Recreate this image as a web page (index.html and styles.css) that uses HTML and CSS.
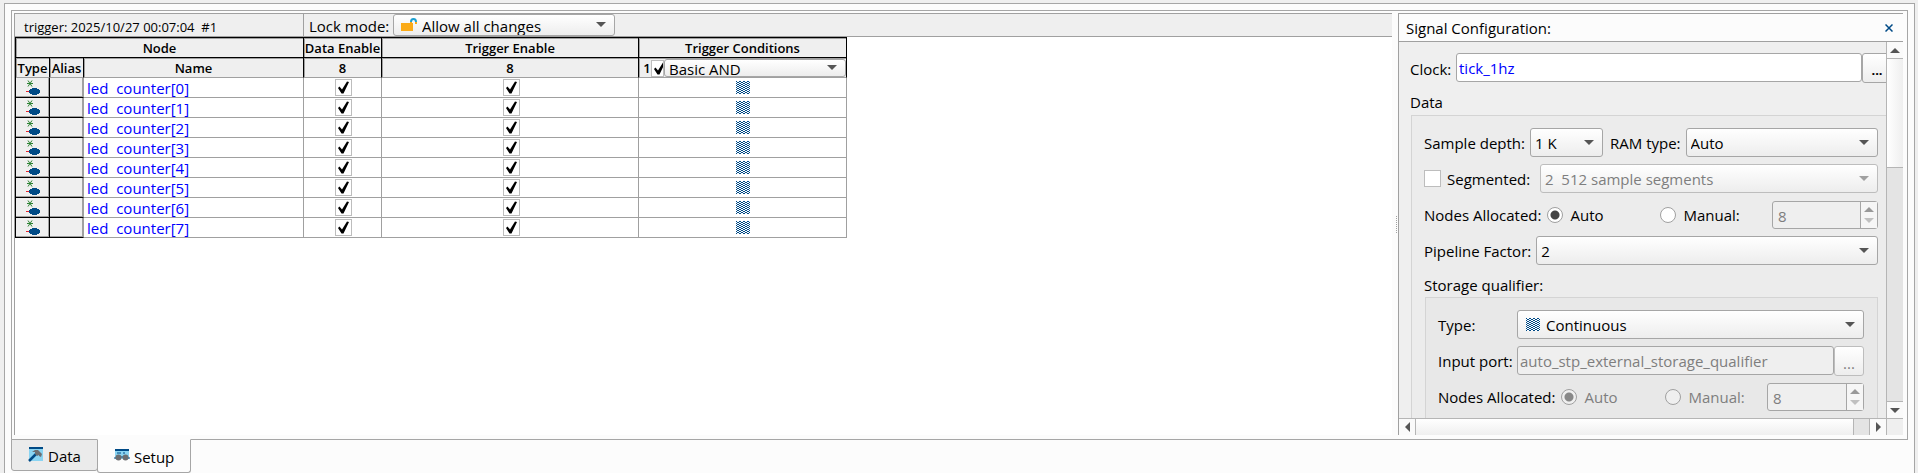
FILE: index.html
```html
<!DOCTYPE html>
<html lang="en">
<head>
<meta charset="utf-8">
<title>Signal Configuration</title>
<link rel="stylesheet" href="styles.css">
</head>
<body>
<svg class="defs" aria-hidden="true">
  <defs>
    <pattern id="weave" width="4" height="4" patternUnits="userSpaceOnUse">
      <rect width="4" height="4" fill="#004a86"/>
      <path d="M0 1h1v1h-1zM3 1h1v1h-1zM1 2h2v1h-2zM0 3h1v1h-1zM3 3h1v1h-1zM1 0h2v1h-2z" fill="#fff"/>
    </pattern>
    <symbol id="dontcare" viewBox="0 0 14 13"><rect width="14" height="13" fill="url(#weave)" shape-rendering="crispEdges"/></symbol>
    <symbol id="node" viewBox="0 0 14 15">
      <path d="M2 0.500L6 6.500M6 0.500L2 6.500M1 3.500H7" stroke="#2c8233" fill="none"/>
      <path d="M0 11h3v1h-3z" fill="#e3262e"/>
      <path d="M6 8h5v1h2v1h1v3h-1v1h-2v1h-5v-1h-2v-1h-1v-3h1v-1h2z" fill="#004a86"/>
    </symbol>
  </defs>
</svg>
<main class="window">
  <section class="page">
    <div class="left">
      <header class="toolbar">
        <span class="stamp">trigger: 2025/10/27 00:07:04&nbsp; #1</span>
        <label class="lock-label" for="lock">Lock mode:</label>
        <span class="select select-lock">
          <svg class="lock-icon" width="16" height="13" viewBox="0 0 16 13"><path d="M10 6V4C10 2 11 1 12.500 1S15 2 15 4" fill="none" stroke="#1d9fd0" stroke-width="2"/><path d="M10 6V4M15 6V4" stroke="#fbab18" stroke-width="2"/><path d="M0 5h12v8H0z" fill="#fbab18"/></svg>
          <select id="lock"><option>Allow all changes</option></select>
        </span>
      </header>
      <table class="nodes">
        <colgroup><col class="c-type"><col class="c-alias"><col class="c-name"><col class="c-data"><col class="c-trig"><col class="c-cond"></colgroup>
        <thead>
          <tr><th colspan="3">Node</th><th>Data Enable</th><th>Trigger Enable</th><th>Trigger Conditions</th></tr>
          <tr><th>Type</th><th>Alias</th><th>Name</th><th>8</th><th>8</th>
            <th class="cond"><div class="cond-row"><label for="c1">1</label><input id="c1" class="check" type="checkbox" checked><span class="select select-cond"><select aria-label="Condition"><option>Basic AND</option></select></span></div></th></tr>
        </thead>
        <tbody>
          <tr><td><svg class="node"><use href="#node"/></svg></td><td></td><td>led&nbsp; counter[0]</td><td><input class="check" type="checkbox" aria-label="Data enable 0" checked></td><td><input class="check" type="checkbox" aria-label="Trigger enable 0" checked></td><td><svg class="weave"><use href="#dontcare"/></svg></td></tr>
          <tr><td><svg class="node"><use href="#node"/></svg></td><td></td><td>led&nbsp; counter[1]</td><td><input class="check" type="checkbox" aria-label="Data enable 1" checked></td><td><input class="check" type="checkbox" aria-label="Trigger enable 1" checked></td><td><svg class="weave"><use href="#dontcare"/></svg></td></tr>
          <tr><td><svg class="node"><use href="#node"/></svg></td><td></td><td>led&nbsp; counter[2]</td><td><input class="check" type="checkbox" aria-label="Data enable 2" checked></td><td><input class="check" type="checkbox" aria-label="Trigger enable 2" checked></td><td><svg class="weave"><use href="#dontcare"/></svg></td></tr>
          <tr><td><svg class="node"><use href="#node"/></svg></td><td></td><td>led&nbsp; counter[3]</td><td><input class="check" type="checkbox" aria-label="Data enable 3" checked></td><td><input class="check" type="checkbox" aria-label="Trigger enable 3" checked></td><td><svg class="weave"><use href="#dontcare"/></svg></td></tr>
          <tr><td><svg class="node"><use href="#node"/></svg></td><td></td><td>led&nbsp; counter[4]</td><td><input class="check" type="checkbox" aria-label="Data enable 4" checked></td><td><input class="check" type="checkbox" aria-label="Trigger enable 4" checked></td><td><svg class="weave"><use href="#dontcare"/></svg></td></tr>
          <tr><td><svg class="node"><use href="#node"/></svg></td><td></td><td>led&nbsp; counter[5]</td><td><input class="check" type="checkbox" aria-label="Data enable 5" checked></td><td><input class="check" type="checkbox" aria-label="Trigger enable 5" checked></td><td><svg class="weave"><use href="#dontcare"/></svg></td></tr>
          <tr><td><svg class="node"><use href="#node"/></svg></td><td></td><td>led&nbsp; counter[6]</td><td><input class="check" type="checkbox" aria-label="Data enable 6" checked></td><td><input class="check" type="checkbox" aria-label="Trigger enable 6" checked></td><td><svg class="weave"><use href="#dontcare"/></svg></td></tr>
          <tr><td><svg class="node"><use href="#node"/></svg></td><td></td><td>led&nbsp; counter[7]</td><td><input class="check" type="checkbox" aria-label="Data enable 7" checked></td><td><input class="check" type="checkbox" aria-label="Trigger enable 7" checked></td><td><svg class="weave"><use href="#dontcare"/></svg></td></tr>
        </tbody>
      </table>
    </div>
    <div class="splitter"><i></i></div>
    <aside class="config">
      <header class="config-head">
        <h2>Signal Configuration:</h2>
        <button class="close" aria-label="Close"><svg width="8" height="8" viewBox="0 0 8 8"><path d="M0.500 0.500L7.500 7.500M7.500 0.500L0.500 7.500" stroke="#004a86" stroke-width="1.500"/></svg></button>
      </header>
      <div class="scroll">
        <div class="view">
          <div class="form">
            <div class="row clock">
              <label for="clock">Clock:</label>
              <input id="clock" class="text" type="text" value="tick_1hz"><button class="dots strong">...</button>
            </div>
            <h3>Data</h3>
            <div class="group">
              <div class="row">
                <label for="depth">Sample depth:</label>
                <span class="select select-depth"><select id="depth"><option>1 K</option></select></span>
                <label for="ram">RAM type:</label>
                <span class="select grow"><select id="ram"><option>Auto</option></select></span>
              </div>
              <div class="row">
                <input id="seg" class="check" type="checkbox">
                <label class="seg-label" for="seg">Segmented:</label>
                <span class="select grow off"><select aria-label="Segments" disabled><option>2&nbsp; 512 sample segments</option></select></span>
              </div>
              <div class="row nodes-row">
                <span>Nodes Allocated:</span>
                <label class="radio r-auto"><input type="radio" name="n1" checked>Auto</label>
                <label class="radio r-manual"><input type="radio" name="n1">Manual:</label>
                <span class="spin"><input type="text" aria-label="Nodes" value="8" disabled><span class="steps"><i class="up"></i><i class="down"></i></span></span>
              </div>
              <div class="row">
                <label for="pipe">Pipeline Factor:</label>
                <span class="select grow"><select id="pipe"><option>2</option></select></span>
              </div>
              <h3>Storage qualifier:</h3>
              <div class="group inner">
                <div class="row">
                  <label class="key" for="type">Type:</label>
                  <span class="select select-type grow"><svg class="weave"><use href="#dontcare"/></svg><select id="type"><option>Continuous</option></select></span>
                </div>
                <div class="row">
                  <label class="key" for="port">Input port:</label>
                  <input id="port" class="text" type="text" value="auto_stp_external_storage_qualifier" disabled><button class="dots" disabled>...</button>
                </div>
                <div class="row nodes-row">
                  <span>Nodes Allocated:</span>
                  <label class="radio r-auto off"><input type="radio" name="n2" checked disabled>Auto</label>
                  <label class="radio r-manual off"><input type="radio" name="n2" disabled>Manual:</label>
                  <span class="spin"><input type="text" aria-label="Qualifier nodes" value="8" disabled><span class="steps"><i class="up"></i><i class="down"></i></span></span>
                </div>
              </div>
            </div>
          </div>
        </div>
        <div class="vbar"><button aria-label="Scroll up"><i class="up"></i></button><div class="vthumb"></div><button class="last" aria-label="Scroll down"><i class="down"></i></button></div>
        <div class="hbar"><button aria-label="Scroll left"><i class="west"></i></button><div class="hthumb"></div><button class="last" aria-label="Scroll right"><i class="east"></i></button></div>
        <div class="corner"></div>
      </div>
    </aside>
  </section>
  <nav class="tabs">
    <button class="tab"><svg width="16" height="15" viewBox="0 0 16 15"><path d="M1 0h14v14H1z" fill="#8ad4f2"/><path d="M1 0h14v2H1z" fill="#004a86"/><path d="M1 14L8 7" stroke="#004a86" stroke-width="2.500"/><path d="M4 5l3-2h3l4 4-1 3-2-1V8L9 9 7 7V5z" fill="#6d6e71"/></svg>Data</button>
    <button class="tab active"><svg width="16" height="12" viewBox="0 0 16 12"><path d="M1 0h14v10H1z" fill="#8ad4f2"/><path d="M1 0h14v2H1z" fill="#004a86"/><path d="M3 4h4M9 4h2M0 9h2M14 9h2M6 8h4" stroke="#004a86"/><circle cx="4.500" cy="8.500" r="3" fill="#6d6e71"/><circle cx="11.500" cy="8.500" r="3" fill="#6d6e71"/></svg>Setup</button>
  </nav>
</main>
</body>
</html>
```
FILE: styles.css
```css
* { box-sizing: border-box; }
body { margin: 0; height: 100vh; overflow: hidden; background: #efefef; color: #000; font: 15px/20px "Open Sans", "Noto Sans", sans-serif; display: flex; flex-direction: column; }
button, input, select { font: inherit; color: inherit; margin: 0; }
h2, h3 { font-size: 15px; font-weight: 400; margin: 0; }
.defs { position: absolute; width: 0; height: 0; }
.window { flex: 1; min-height: 0; margin: 3px 3px 0 4px; padding: 6px; padding-bottom: 0; border: 1px solid #a6a6a6; border-bottom: 0; background: #fcfcfc; display: flex; flex-direction: column; }
.page { flex: 1; min-height: 0; border: 1px solid #a6a6a6; padding: 2px 4px 4px 2px; display: flex; }
.left { flex: 1; min-width: 0; background: #fff; border-left: 1px solid #a0a0a0; border-top: 1px solid #a0a0a0; }
.toolbar { display: flex; align-items: center; height: 23px; background: #efefef; border-bottom: 1px solid #a0a0a0; }
.stamp { width: 289px; padding: 3px 0 0 9px; height: 22px; font-size: 13px; border-right: 1px solid #a0a0a0; white-space: nowrap; }
.lock-label { width: 89px; padding: 2px 0 0 5px; white-space: nowrap; }

.select { position: relative; display: flex; height: 29px; }
.select select { appearance: none; width: 100%; height: 100%; padding: 0 4px; border: 1px solid #a6a6a6; border-radius: 3px; background: linear-gradient(#fff, #ededed); }
.select::after { content: ""; position: absolute; right: 9px; top: 50%; margin-top: -3px; border: 5px solid transparent; border-top-color: #555; border-bottom: 0; }
.select.off select { color: #7e7e7e; border-color: #bdbdbd; opacity: 1; }
.select.off::after { border-top-color: #a0a0a0; }
.grow { flex: 1; }
.select-lock { width: 222px; height: 22px; }
.select-lock select { padding: 1px 4px 0 28px; }
.lock-icon { position: absolute; left: 8px; top: 4px; }

.nodes { table-layout: fixed; width: 832px; border-collapse: separate; border-spacing: 0; border-left: 1px solid #000; border-top: 1px solid #000; }
.c-type { width: 34px; }
.c-alias { width: 34px; }
.c-name { width: 220px; }
.c-data { width: 78px; }
.c-trig { width: 257px; }
.nodes th, .nodes td { height: 20px; padding: 0; text-align: center; vertical-align: middle; line-height: 18px; }
.nodes th { padding-top: 1px; font-size: 13px; font-weight: 700; background: #efefef; border-right: 1px solid #000; border-bottom: 1px solid #000; box-shadow: inset 1px 1px #a0a0a0; white-space: nowrap; }
.nodes thead th { font-weight: 600; }
.nodes tr + tr th { border-bottom-color: #a0a0a0; }
.nodes td { border-right: 1px solid #a0a0a0; border-bottom: 1px solid #a0a0a0; }
.nodes td:nth-child(-n+2) { background: #efefef; border-color: #000; box-shadow: inset -1px -1px #a0a0a0; }
.nodes td:nth-child(2) { border-right-color: #a0a0a0; }
.nodes td:nth-child(3) { padding: 2px 0 0 3px; text-align: left; line-height: 17px; color: #00f; }
.nodes td svg, .nodes td .check { display: block; margin: 0 auto; }
.nodes td .check { padding: 0; }
.nodes td:nth-child(4), .nodes td:nth-child(5) { padding-left: 2px; }
.node { width: 14px; height: 15px; }
.weave { width: 14px; height: 13px; }
.cond-row { display: flex; align-items: center; height: 18px; padding-left: 4px; }
.cond-row label { width: 8px; }
.cond-row .check { width: 13px; background-position: -2px 0; }
.select-cond { flex: 1; height: 18px; font-size: 15px; font-weight: 400; }

.check { appearance: none; width: 17px; height: 17px; flex: none; background: #fff; border: 1px solid #bdbdbd; }
.check:checked { background: #fff url("data:image/svg+xml,%3Csvg xmlns='http://www.w3.org/2000/svg' width='15' height='15'%3E%3Cpath d='M2 8l1.500-1.500 2.500 3L11 1.500l2 0.500L7.500 13.500H5.500z'/%3E%3C/svg%3E") no-repeat; }

.splitter { width: 6px; display: flex; align-items: center; }
.splitter i { width: 1px; height: 17px; margin-left: 4px; border-left: 1px dotted #a0a0a0; }
.config { width: 505px; border-left: 1px solid #a0a0a0; border-top: 1px solid #a0a0a0; display: flex; flex-direction: column; background: #efefef; }
.config-head { display: flex; justify-content: space-between; align-items: center; height: 28px; padding: 0 10px 0 7px; background: #fcfcfc; border-bottom: 1px solid #a0a0a0; }
.close { border: 0; background: none; padding: 0; display: flex; }
.scroll { flex: 1; min-height: 0; display: grid; grid-template: minmax(0, 1fr) 17px / minmax(0, 1fr) 17px; }
.view { overflow: hidden; }
.form { width: 493px; padding-top: 11px; }
.row { display: flex; align-items: center; height: 29px; white-space: nowrap; }
.clock { padding-left: 11px; }
.clock label { width: 46px; padding-top: 2px; }
.text { flex: 1; min-width: 0; height: 29px; padding: 0 2px; border: 1px solid #a6a6a6; border-radius: 3px; background: #fff; color: #00f; }
.text:disabled { background: #efefef; color: #7e7e7e; }
.dots { width: 30px; height: 30px; padding: 4px 0 0; border: 1px solid #bdbdbd; border-radius: 3px; background: linear-gradient(#fff, #ededed); color: #7e7e7e; }
.strong { color: #000; font-size: 13px; font-weight: 700; border-color: #a6a6a6; }
.form h3 { height: 20px; }
.clock + h3 { margin: 10px 0 3px 11px; }
.group { margin-left: 12px; padding: 12px 13px 0 12px; border: 1px solid #d4d4d4; background: #ececec; display: flex; flex-direction: column; gap: 7px; }
.group h3 { margin-top: 3px; }
.inner { margin: -5px 0 0 1px; padding: 12px 13px 12px 12px; background: #e8e8e8; }
.select-depth { width: 73px; margin: 0 7px 0 5px; }
.group .row label + .grow { margin-left: 5px; }
.seg-label { margin-left: 6px; width: 88px; }
.radio { display: flex; align-items: center; gap: 7px; }
.radio.off { color: #7e7e7e; }
.radio input { appearance: none; width: 16px; height: 16px; border: 1px solid #a0a0a0; border-radius: 50%; background: #fff; }
.radio input:checked { background: radial-gradient(circle, #444 0 4px, #fff 5px); }
.radio.off input { background: #efefef; }
.radio.off input:checked { background: radial-gradient(circle, #888 0 4px, #efefef 5px); }
.r-auto { width: 113px; margin-left: 6px; }
.inner .r-auto { width: 104px; }
.spin { display: flex; flex: none; width: 106px; height: 28px; margin-left: auto; border: 1px solid #a6a6a6; border-radius: 3px; background: #efefef; }
.inner .spin { width: 97px; }
.spin input { flex: 1; min-width: 0; border: 0; padding: 2px 5px 0; background: none; color: #7e7e7e; }
.steps { width: 17px; border-left: 1px solid #a6a6a6; background: #f6f6f6; display: flex; flex-direction: column; align-items: center; justify-content: center; gap: 6px; }
.up, .down, .west, .east { border: 5px solid transparent; }
.up { border-top: 0; border-bottom-color: #555; }
.down { border-bottom: 0; border-top-color: #555; }
.west { border-left: 0; border-right-color: #555; }
.east { border-right: 0; border-left-color: #555; }
.steps .up { border-bottom-color: #999; }
.steps .down { border-top-color: #c0c0c0; }
.inner .key { width: 79px; }
.group .inner .key + .grow { margin-left: 0; }
.select-type select { padding-left: 28px; }
.select-type .weave { position: absolute; left: 9px; top: 8px; }

.vbar, .hbar { display: flex; background: #e4e4e4; }
.vbar { flex-direction: column; border-left: 1px solid #b5b5b5; }
.hbar { border-top: 1px solid #b5b5b5; }
.vbar button, .hbar button { flex: none; display: flex; align-items: center; justify-content: center; padding: 0; border: 0; background: #fafafa; }
.vbar button { height: 17px; border-bottom: 1px solid #b5b5b5; }
.vbar .last { margin-top: auto; border: 0; border-top: 1px solid #b5b5b5; }
.hbar button { width: 17px; border-right: 1px solid #b5b5b5; }
.hbar .last { margin-left: auto; border: 0; border-left: 1px solid #b5b5b5; }
.vthumb { height: 29%; border-bottom: 1px solid #b5b5b5; background: linear-gradient(90deg, #fff, #efefef); }
.hthumb { width: 90%; border-right: 1px solid #b5b5b5; background: linear-gradient(#fff, #efefef); }
.corner { border-left: 1px solid #b5b5b5; border-top: 1px solid #b5b5b5; }

.tabs { display: flex; align-items: flex-start; height: 34px; margin-top: -1px; flex: none; }
.tab { display: flex; align-items: center; gap: 4px; height: 32px; padding: 2px 16px 0; border: 1px solid #a6a6a6; border-radius: 0 0 3px 3px; background: #ebebeb; }
.tab svg { margin-bottom: 4px; }
.active { height: 34px; margin-left: -1px; background: #fcfcfc; border-top-color: #fcfcfc; }
```
